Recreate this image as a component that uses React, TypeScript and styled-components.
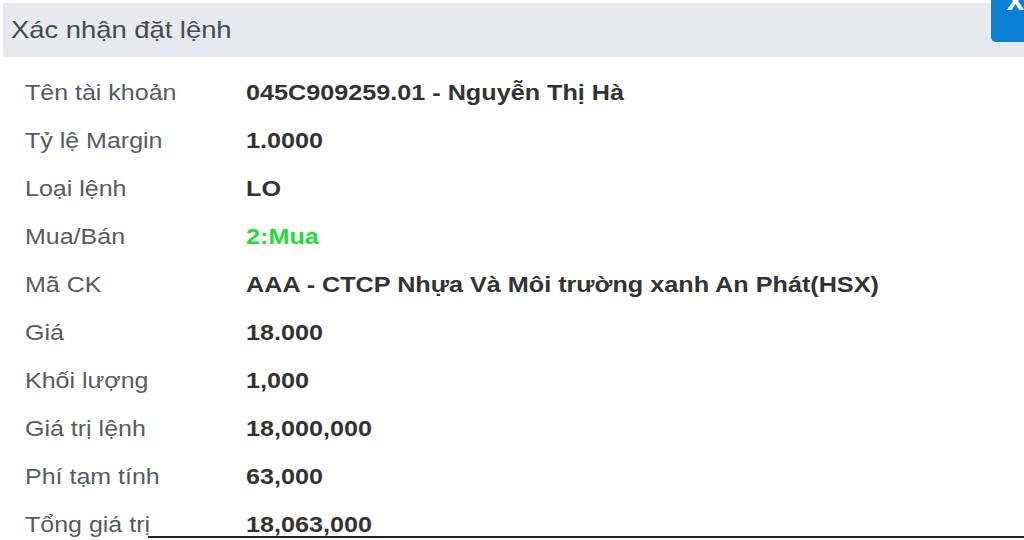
import React from "react";
import styled, { createGlobalStyle } from "styled-components";

const FONT = `"Liberation Sans", Arial, Helvetica, sans-serif`;

const Global = createGlobalStyle`
  html, body { margin: 0; padding: 0; background: #ffffff; }
  body { width: 1024px; height: 540px; overflow: hidden; font-family: ${FONT}; }
`;

const Dialog = styled.div`
  position: relative;
  width: 1024px;
  height: 540px;
  overflow: hidden;
  background: #ffffff;
  padding: 3px 0 0 3px;
  box-sizing: border-box;
  font-family: ${FONT};
`;

const Header = styled.div`
  height: 54px;
  background: #e6e9ee;
  display: flex;
  align-items: center;
  padding-left: 8px;
`;

const Title = styled.div`
  font-size: 24px;
  color: #474a4e;
  transform: scaleX(1.14);
  transform-origin: left center;
  white-space: nowrap;
`;

const CloseButton = styled.div`
  position: absolute;
  top: -10px;
  right: -4px;
  width: 37px;
  height: 52px;
  background: #0b7fd5;
  border-radius: 5px;
  color: #ffffff;
  font-size: 32px;
  font-weight: bold;
  display: flex;
  justify-content: center;
  line-height: 18px;
  overflow: hidden;
`;

const CloseGlyph = styled.span`
  margin-left: 12px;
`;

const Body = styled.div`
  padding: 12px 0 0 22px;
`;

const Row = styled.div`
  display: grid;
  grid-template-columns: 221px 1fr;
  height: 48px;
  align-items: center;
`;

const Label = styled.div`
  font-size: 22px;
  color: #575b60;
  transform: scaleX(1.136);
  transform-origin: left center;
  white-space: nowrap;
`;

const Value = styled.div<{ $green?: boolean }>`
  font-size: 22px;
  font-weight: bold;
  color: ${(p) => (p.$green ? "#22dd33" : "#333333")};
  transform: scaleX(1.145);
  transform-origin: left center;
  white-space: nowrap;
`;

const BottomRule = styled.div`
  position: absolute;
  left: 148px;
  right: 0;
  top: 536px;
  height: 2px;
  background: #222222;
`;

const rows: { label: string; value: string; green?: boolean }[] = [
  { label: "Tên tài khoản", value: "045C909259.01 - Nguyễn Thị Hà" },
  { label: "Tỷ lệ Margin", value: "1.0000" },
  { label: "Loại lệnh", value: "LO" },
  { label: "Mua/Bán", value: "2:Mua", green: true },
  { label: "Mã CK", value: "AAA - CTCP Nhựa Và Môi trường xanh An Phát(HSX)" },
  { label: "Giá", value: "18.000" },
  { label: "Khối lượng", value: "1,000" },
  { label: "Giá trị lệnh", value: "18,000,000" },
  { label: "Phí tạm tính", value: "63,000" },
  { label: "Tổng giá trị", value: "18,063,000" },
];

export default function App() {
  return (
    <>
      <Global />
      <Dialog>
        <Header>
          <Title>Xác nhận đặt lệnh</Title>
        </Header>
        <CloseButton>
          <CloseGlyph>x</CloseGlyph>
        </CloseButton>
        <Body>
          {rows.map((r) => (
            <Row key={r.label}>
              <Label>{r.label}</Label>
              <Value $green={r.green}>{r.value}</Value>
            </Row>
          ))}
        </Body>
        <BottomRule />
      </Dialog>
    </>
  );
}
